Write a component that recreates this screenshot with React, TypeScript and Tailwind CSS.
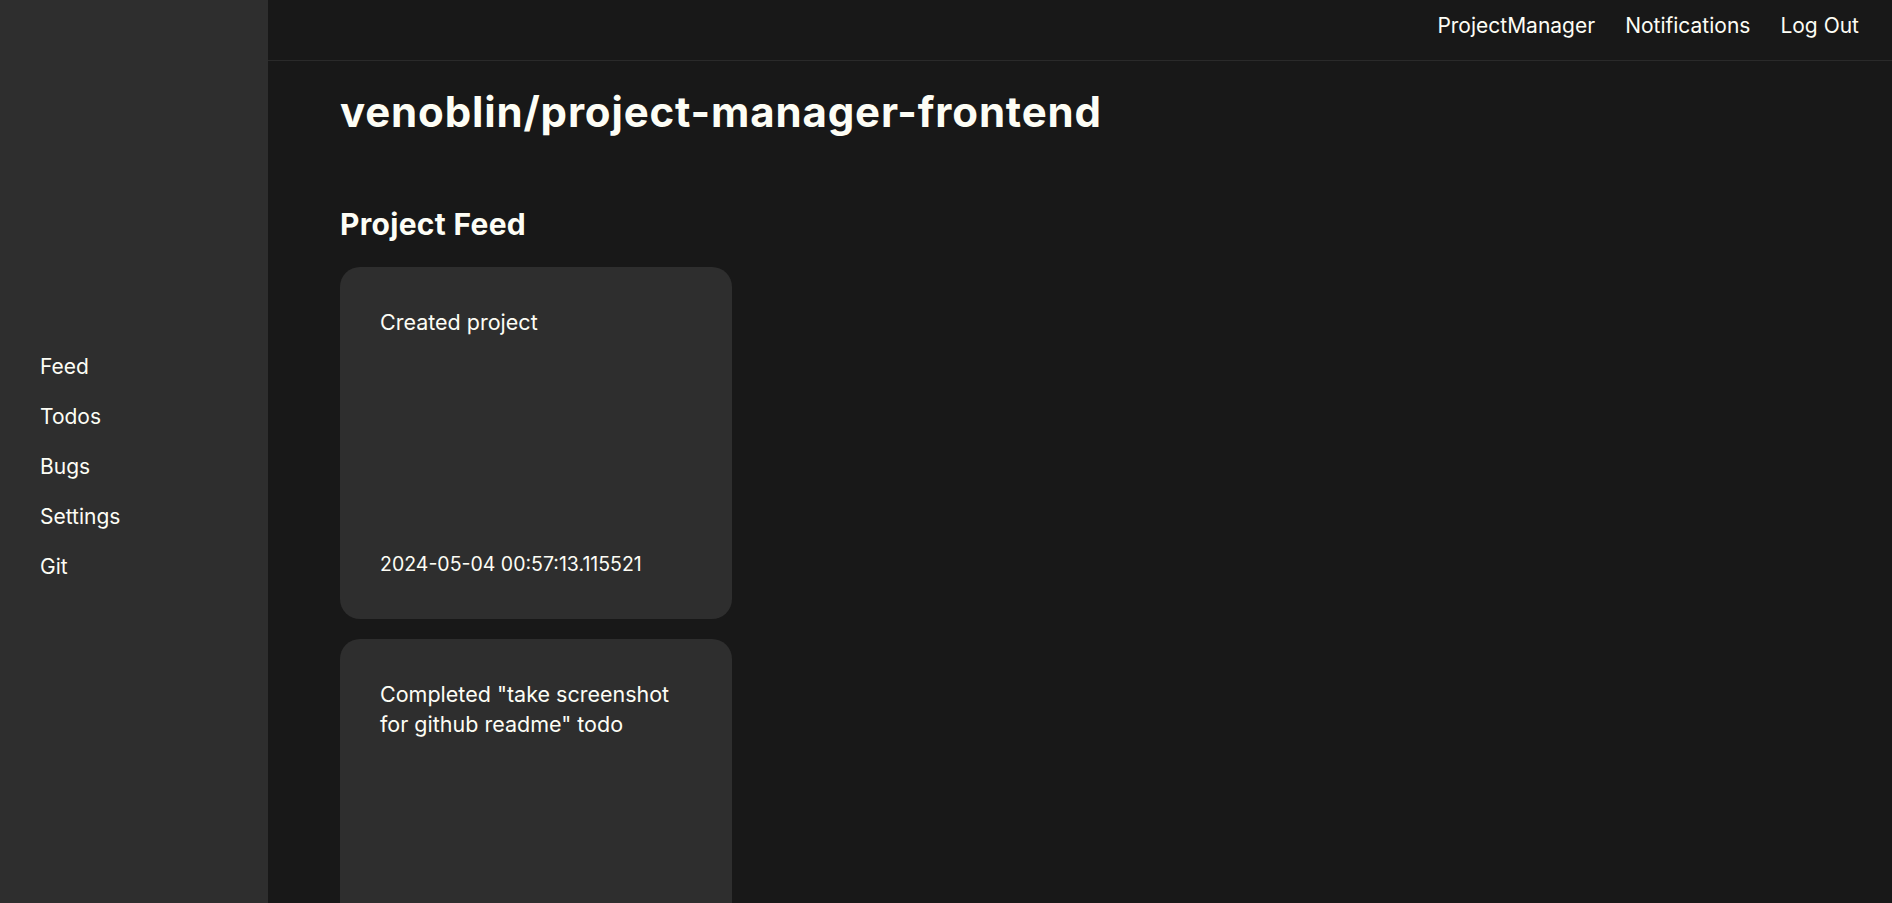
import React from "react";

const sideLinks = ["Feed", "Todos", "Bugs", "Settings", "Git"];

const feed = [
  { text: "Created project", date: "2024-05-04 00:57:13.115521" },
  {
    text: 'Completed "take screenshot for github readme" todo',
    date: "2024-05-04 01:12:40.502113",
  },
];

const Sidebar = () => (
  <aside className="w-[268px] shrink-0 bg-[#2e2e2e] pt-[342px]">
    <nav className="flex flex-col">
      {sideLinks.map((l) => (
        <a key={l} href="#" className="px-[40px] py-[10px] text-[21px] leading-[30px] text-[#fdfdf5]">
          {l}
        </a>
      ))}
    </nav>
  </aside>
);

const Header = () => (
  <header className="flex h-[61px] items-start justify-end gap-[30px] border-b border-[#2a2a2a] pt-[11px] pr-[33px]">
    <a href="#" className="text-[21px] leading-[30px] text-[#fdfdf5]">ProjectManager</a>
    <a href="#" className="text-[21px] leading-[30px] text-[#fdfdf5]">Notifications</a>
    <a href="#" className="text-[21px] leading-[30px] text-[#fdfdf5]">Log Out</a>
  </header>
);

const FeedCard = ({ text, date }: { text: string; date: string }) => (
  <div className="flex h-[352px] w-[392px] flex-col justify-between rounded-[20px] bg-[#2e2e2e] p-[40px] leading-[30px] text-[#fdfdf5]">
    <p className="text-[21.5px]">{text}</p>
    <p className="text-[19.5px]">{date}</p>
  </div>
);

export default function App() {
  return (
    <div className="flex min-h-screen bg-[#181818] font-['Inter',sans-serif]">
      <Sidebar />
      <div className="flex-1">
        <Header />
        <main className="px-[72px] pb-[40px]">
          <h1 className="pt-[26px] text-[42px] leading-[50px] font-bold tracking-[0.02em] text-[#fdfdf5]">
            venoblin/project-manager-frontend
          </h1>
          <h2 className="mt-[69px] text-[30px] leading-[36px] font-bold tracking-[0.01em] text-[#fdfdf5]">
            Project Feed
          </h2>
          <div className="mt-[25px] flex flex-col gap-[20px]">
            {feed.map((f) => (
              <FeedCard key={f.date} text={f.text} date={f.date} />
            ))}
          </div>
        </main>
      </div>
    </div>
  );
}
